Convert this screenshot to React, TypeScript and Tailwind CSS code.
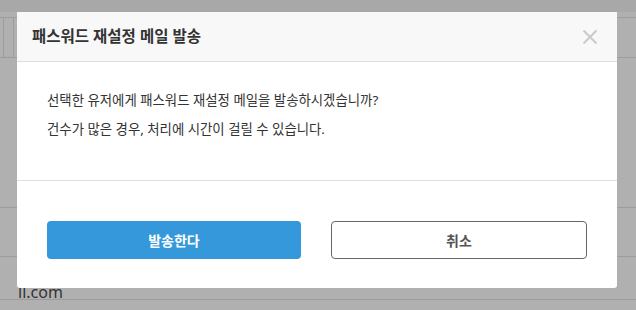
import React from "react";

const FONT = { fontFamily: '"Noto Sans", "Noto Sans CJK KR", sans-serif' };

const CloseIcon = () => (
  <svg width="16" height="16" viewBox="0 0 16 16" fill="none" stroke="#cacaca" strokeWidth="2">
    <path d="M1.5 1.5 L14.5 14.5 M14.5 1.5 L1.5 14.5" />
  </svg>
);

const BackdropRows = () => (
  <div className="absolute inset-0 bg-[#b0b0b0]">
    <div className="h-[12px] bg-[#a8a8a8]" />
    <div className="h-[5px] bg-[#b0b0b0]" />
    <div className="flex h-[41px] border-t border-b border-[#9c9c9c]">
      <div className="w-[4px] border-r border-[#9c9c9c]" />
      <div className="w-[10px] border-r border-[#9c9c9c]" />
    </div>
    <div className="h-[150px] border-b border-[#9c9c9c]" />
    <div className="h-[49px] border-b border-[#9c9c9c]" />
    <div className="h-[43px] border-b border-[#9c9c9c] pl-[18px] pt-[25px] text-[16px] leading-[20px] text-[#333]">
      ll.com
    </div>
  </div>
);

export default function App() {
  return (
    <div className="relative h-[310px] w-[636px] overflow-hidden" style={FONT}>
      <BackdropRows />
      <div className="relative pl-[17px] pt-[12px]">
        <div className="w-[600px] overflow-hidden rounded-b-[3px] bg-white">
          <div className="flex h-[50px] items-center justify-between border-b border-[#dedede] bg-[#f8f8f8] pl-[15px] pr-[19px]">
            <h2 className="text-[15.5px] font-bold text-[#333]">패스워드 재설정 메일 발송</h2>
            <CloseIcon />
          </div>
          <div className="border-b border-[#dedede] px-[30px] pt-[28px] pb-[41px] text-[13.4px] text-[#333]">
            <p className="leading-[20px]">선택한 유저에게 패스워드 재설정 메일을 발송하시겠습니까?</p>
            <p className="mt-[9px] leading-[20px]">건수가 많은 경우, 처리에 시간이 걸릴 수 있습니다.</p>
          </div>
          <div className="flex gap-[30px] px-[30px] pt-[40px] pb-[29px]">
            <button className="h-[38px] flex-1 rounded-[4px] bg-[#3498db] text-[14px] font-bold text-white">
              발송한다
            </button>
            <button className="h-[38px] flex-1 rounded-[4px] border border-[#666] bg-white text-[14px] font-bold text-[#555]">
              취소
            </button>
          </div>
        </div>
      </div>
    </div>
  );
}
